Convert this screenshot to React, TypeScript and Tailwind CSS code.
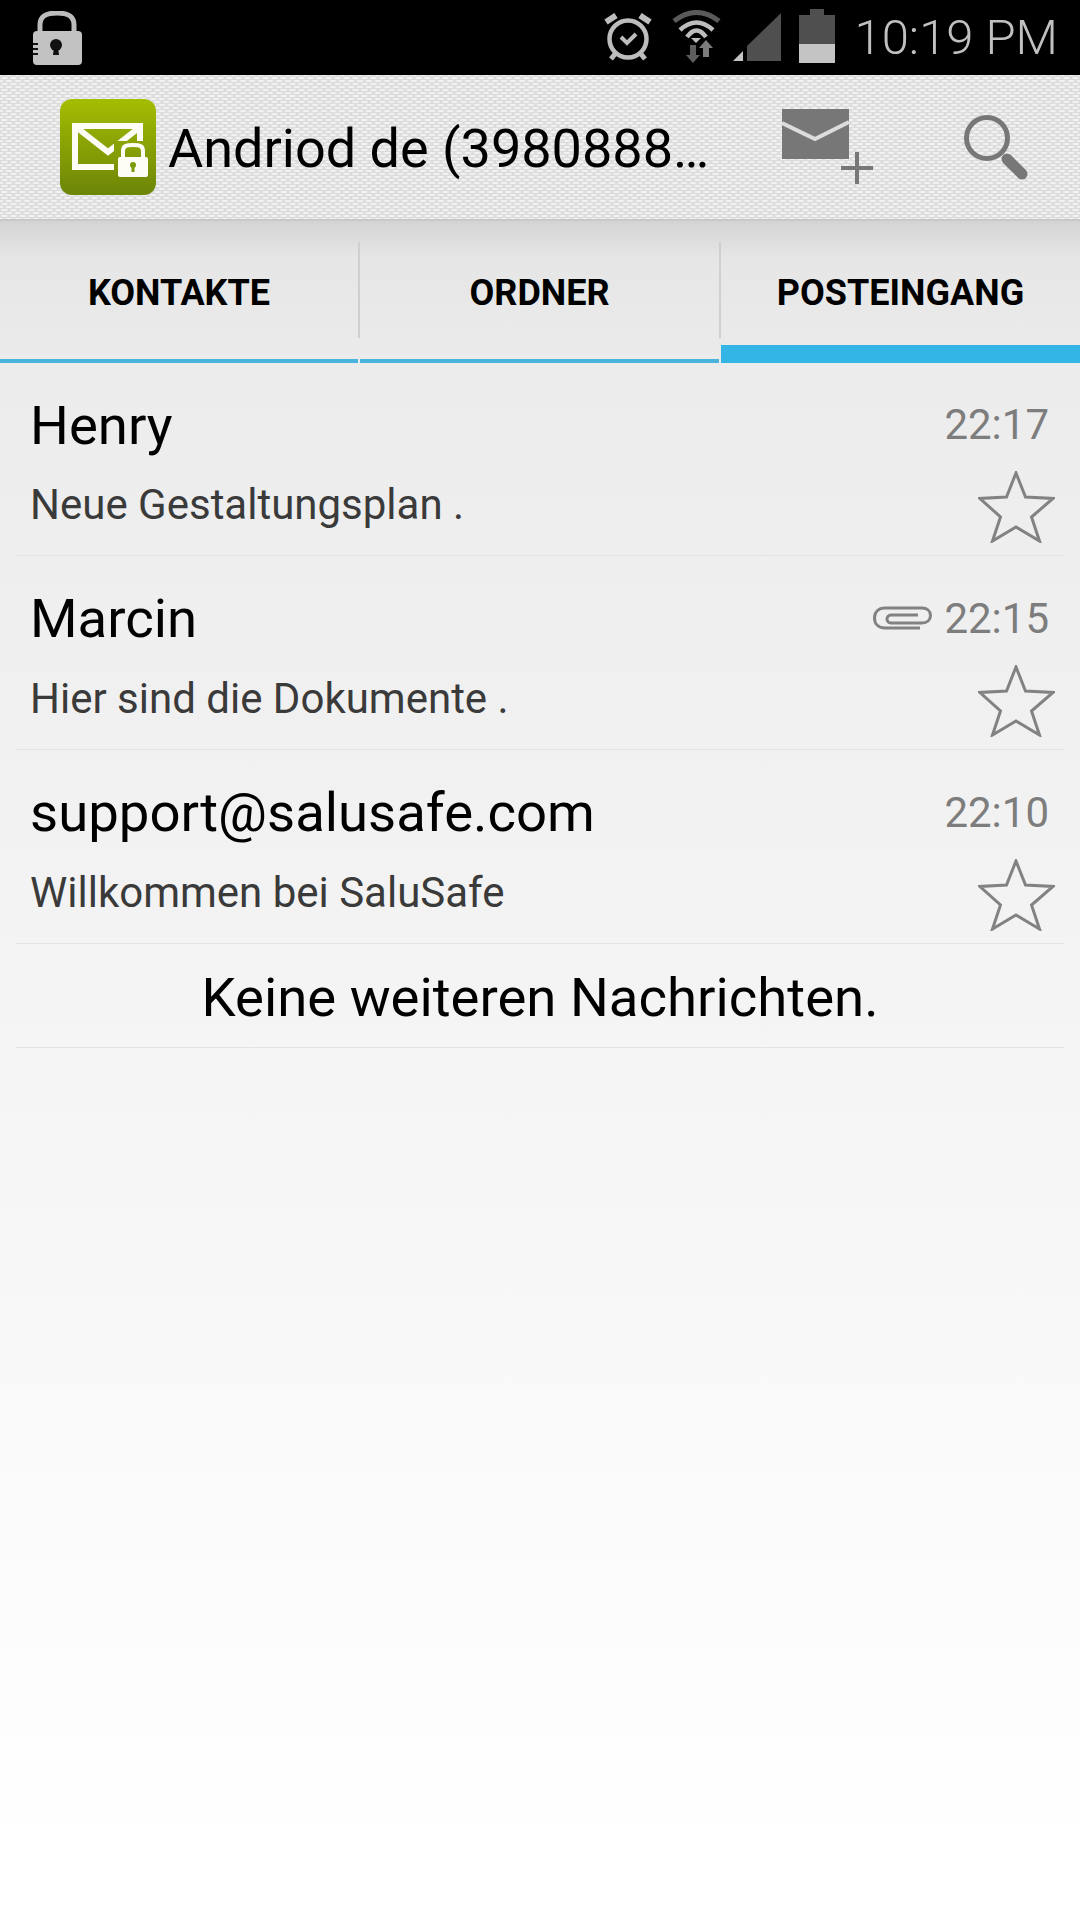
import React from "react";

function Star() {
  return (
    <svg width="77" height="72" viewBox="0 0 77 72" className="block">
      <polygon points="38,2 47.5,26 75,27.5 53.5,46 61.5,70 38,56 14.5,70 22.5,46 2,27.5 28.5,26" fill="none" stroke="#828282" strokeWidth="3" strokeLinejoin="miter" />
    </svg>
  );
}

function Clip() {
  return (
    <svg width="59" height="24" viewBox="0 0 59 24" className="block">
      <path d="M47 22H12C5 22 1.500 17.500 1.500 12S5 2 12 2H49C54 2 57.500 5 57.500 9.500S54 17 49 17H18C15.500 17 14 15 14 13S15.500 9 18 9H45" fill="none" stroke="#828282" strokeWidth="3" />
    </svg>
  );
}

function Row({ name, subject, time, clip, first }: { name: string; subject: string; time: string; clip?: boolean; first?: boolean }) {
  return (
    <div className={`mx-[16px] flex border-b border-[#e3e3e3] ${first ? "h-[193px]" : "h-[194px]"}`}>
      <div className="flex-1 pl-[14px]">
        <div className="mt-[32px] h-[60px] text-[54.500px] leading-[60px] text-black">{name}</div>
        <div className={`h-[50px] text-[42px] leading-[50px] text-[#3a3a3a] ${first ? "mt-[25px]" : "mt-[26px]"}`}>{subject}</div>
      </div>
      <div className="flex w-[220px] flex-col items-end pr-[9px]">
        <div className={`mr-[6px] flex h-[50px] items-center ${first ? "mt-[37px]" : "mt-[38px]"}`}>
          {clip ? <span className="mr-[12px] mt-[-2px]"><Clip /></span> : null}
          <span className="text-[42px] leading-[50px] text-[#7d7d7d]">{time}</span>
        </div>
        <div className="mt-[21px]"><Star /></div>
      </div>
    </div>
  );
}

function Tab({ label, width, active }: { label: string; width: string; active?: boolean }) {
  return (
    <div className={`flex h-[142px] flex-col ${width}`}>
      <div className="flex h-[124px] items-center justify-center pt-[20px] text-[36px] font-bold text-black">{label}</div>
      <div className={`mt-auto w-full ${active ? "h-[18px] bg-[#33b5e5]" : "h-[4px] bg-[#4ab3dc]"}`} />
    </div>
  );
}

export default function App() {
  return (
    <div className="flex h-[1920px] w-[1080px] flex-col overflow-hidden bg-white font-[Roboto,sans-serif]">
      {/* status bar */}
      <div className="flex h-[75px] shrink-0 items-start bg-black">
        <svg width="50" height="54" viewBox="0 0 50 54" className="ml-[32px] mt-[11px]">
          <path d="M8 21V14C8 5 14 2 25 2S42 5 42 14V21" fill="none" stroke="#bcbcbc" strokeWidth="5" />
          <rect x="1" y="20" width="49" height="34" rx="4" fill="#c2c2c2" />
          <circle cx="24" cy="34" r="6" fill="#111" />
          <path d="M22 36H26L27 44H21Z" fill="#111" />
          <path d="M1 33H6M1 38H6M1 43H6" stroke="#111" strokeWidth="2" />
        </svg>
        <svg width="48" height="50" viewBox="0 0 48 50" className="ml-auto mt-[13px]">
          <circle cx="24" cy="26" r="18.500" fill="none" stroke="#bdbdbd" strokeWidth="4.500" />
          <path d="M2 9L12 2.500M46 9L36 2.500" stroke="#bdbdbd" strokeWidth="6" />
          <path d="M11 41L7 46M37 41L41 46" stroke="#bdbdbd" strokeWidth="5" />
          <path d="M17 24L23 30L32 21" fill="none" stroke="#bdbdbd" strokeWidth="4" />
        </svg>
        <svg width="50" height="54" viewBox="0 0 50 54" className="ml-[20px] mt-[10px]">
          <path d="M2 11Q24.500 -6 47 11" fill="none" stroke="#5a5a5a" strokeWidth="5" />
          <path d="M8 20Q24.500 5 41 20" fill="none" stroke="#bdbdbd" strokeWidth="4.500" />
          <path d="M15 27Q24.500 14 34 27" fill="none" stroke="#bdbdbd" strokeWidth="4.500" />
          <path d="M19 28L29 28L24 33Z" fill="#bdbdbd" />
          <path d="M14 45H18V35H24V45H28L21 53Z" fill="#5e5e5e" />
          <path d="M27 38L34 30L41 38H37V47H31V38Z" fill="#7c7c7c" />
        </svg>
        <svg width="49" height="49" viewBox="0 0 49 49" className="ml-[11px] mt-[13px]">
          <polygon points="48,0 14,33 14,48 48,48" fill="#4f4f4f" />
          <polygon points="0,48 10,38 10,48" fill="#c4c4c4" />
        </svg>
        <svg width="36" height="54" viewBox="0 0 36 54" className="ml-[17px] mt-[9px]">
          <rect x="11" y="0" width="14" height="6" fill="#4f4f4f" />
          <rect x="0" y="6" width="36" height="29" fill="#4f4f4f" />
          <rect x="0" y="35" width="36" height="19" fill="#c4c4c4" />
        </svg>
        <div className="ml-[19px] mr-[22px] h-[75px] whitespace-nowrap text-[49px] font-light leading-[75px] text-[#c0c0c0]">10:19 PM</div>
      </div>

      {/* action bar */}
      <div className="flex h-[146px] shrink-0 items-center border-b-2 border-[#c9c9c9] bg-[#dcdcdc] bg-[image:radial-gradient(ellipse_4px_1.500px,#f2f2f2_55%,transparent_100%),radial-gradient(ellipse_4px_1.500px,#f2f2f2_55%,transparent_100%)] bg-[length:9px_6px] bg-[position:0_0,4.500px_3px]">
        <svg width="96" height="96" viewBox="0 0 96 96" className="ml-[60px] shrink-0">
          <defs>
            <linearGradient id="lg" gradientUnits="userSpaceOnUse" x1="0" y1="0" x2="0" y2="96">
              <stop offset="0" stopColor="#a4bd02" />
              <stop offset="1" stopColor="#6c8508" />
            </linearGradient>
          </defs>
          <rect width="96" height="96" rx="12" fill="url(#lg)" />
          <rect x="15" y="27" width="65" height="41" fill="none" stroke="#fdfdf5" strokeWidth="6" />
          <path d="M16 28L48 53L80 28" fill="none" stroke="#fdfdf5" strokeWidth="6" />
          <rect x="54" y="42" width="38" height="40" fill="url(#lg)" />
          <path d="M63 59V52C63 47 66 46 73 46S83 47 83 52V59" fill="none" stroke="#fdfdf5" strokeWidth="4" />
          <rect x="58" y="58" width="30" height="20" rx="2" fill="#fdfdf5" />
          <circle cx="73" cy="66" r="3" fill="#7d9a08" />
          <rect x="71.500" y="66" width="3" height="7" fill="#7d9a08" />
        </svg>
        <div className="ml-[12px] mt-[4px] w-[601px] shrink-0 whitespace-nowrap text-[54px] leading-none text-black">Andriod de (3980888…</div>
        <svg width="94" height="76" viewBox="0 0 94 76" className="ml-[13px] shrink-0">
          <rect width="67" height="50" fill="#777" />
          <path d="M0 14L33 30L67 13" fill="none" stroke="#dcdcdc" strokeWidth="4" />
          <path d="M75 43V75M59 59H91" stroke="#777" strokeWidth="4" />
        </svg>
        <svg width="65" height="65" viewBox="0 0 65 65" className="ml-[88px] mt-[1px] shrink-0">
          <circle cx="23" cy="23" r="20.500" fill="none" stroke="#777" strokeWidth="5" />
          <path d="M43 44L58 59" stroke="#777" strokeWidth="11" strokeLinecap="round" />
        </svg>
      </div>

      {/* tabs */}
      <div className="flex h-[142px] shrink-0 bg-[linear-gradient(#d4d4d4,#e6e6e6_36px,#ebebeb)]">
        <Tab label="KONTAKTE" width="w-[358px]" />
        <div className="mt-[21px] h-[96px] w-[2px] bg-[#cfcfcf]" />
        <Tab label="ORDNER" width="w-[359px]" />
        <div className="mt-[21px] h-[96px] w-[2px] bg-[#cfcfcf]" />
        <Tab label="POSTEINGANG" width="w-[359px]" active />
      </div>

      {/* list */}
      <div className="flex-1 bg-[linear-gradient(#ececec,#ffffff_96%)]">
        <Row first name="Henry" subject="Neue Gestaltungsplan ." time="22:17" />
        <Row name="Marcin" subject="Hier sind die Dokumente ." time="22:15" clip />
        <Row name="support@salusafe.com" subject="Willkommen bei SaluSafe" time="22:10" />
        <div className="mx-[16px] flex h-[104px] items-center justify-center border-b border-[#e3e3e3] pt-[4px] text-[54.500px] text-black">Keine weiteren Nachrichten.</div>
      </div>
    </div>
  );
}
